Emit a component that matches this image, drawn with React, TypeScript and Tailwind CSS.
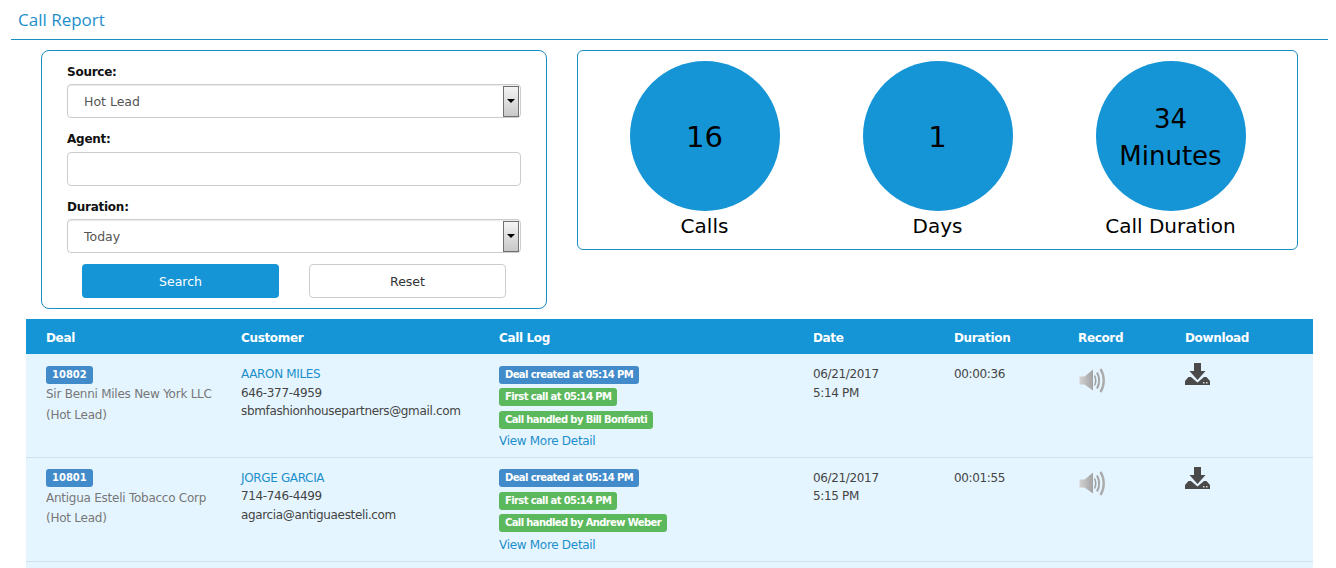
const rows = [
  {
    id: "10802",
    company: "Sir Benni Miles New York LLC",
    name: "AARON MILES",
    phone: "646-377-4959",
    email: "sbmfashionhousepartners@gmail.com",
    agent: "Call handled by Bill Bonfanti",
    date: "06/21/2017",
    time: "5:14 PM",
    duration: "00:00:36",
  },
  {
    id: "10801",
    company: "Antigua Esteli Tobacco Corp",
    name: "JORGE GARCIA",
    phone: "714-746-4499",
    email: "agarcia@antiguaesteli.com",
    agent: "Call handled by Andrew Weber",
    date: "06/21/2017",
    time: "5:15 PM",
    duration: "00:01:55",
  },
];

const stats = [
  { value: "16", label: "Calls", big: true },
  { value: "1", label: "Days", big: true },
  { value: "34 Minutes", label: "Call Duration", big: false },
];

function SpeakerIcon({ id }: { id: string }) {
  return (
    <svg width="27" height="25" viewBox="0 0 27 25" className="block">
      <defs>
        <linearGradient id={id} x1="0" y1="0" x2="1" y2="0">
          <stop offset="0" stopColor="#d2d2d2" />
          <stop offset="1" stopColor="#a2a2a2" />
        </linearGradient>
      </defs>
      <path d="M0.500 8.500h5L14 1.500v21l-8.500-6h-5z" fill={`url(#${id})`} />
      <path d="M15.500 7.500c1.500 3 1.500 7 0 10" fill="none" stroke="#9e9e9e" strokeWidth="1.500" />
      <path d="M18 4.500c2.600 4.800 2.600 11.200 0 16" fill="none" stroke="#a4a4a4" strokeWidth="2" />
      <path d="M21.500 1c4.300 6.800 4.300 16.200 0 23" fill="none" stroke="#acacac" strokeWidth="2.400" />
    </svg>
  );
}

function DownloadIcon() {
  return (
    <svg width="25" height="22" viewBox="0 0 25 22" className="block">
      <path d="M9 0h7v8h4.500l-8 9-8-9H9z" fill="#4a4a4a" />
      <path d="M0 18 3.500 14H6l6.500 5.500L19 14h2.500L25 18v4H0z" fill="#4a4a4a" />
      <rect x="18" y="19" width="1.500" height="1.500" fill="#d8d8d8" />
      <rect x="21" y="19" width="1.500" height="1.500" fill="#d8d8d8" />
    </svg>
  );
}

function SelectBox({ value }: { value: string }) {
  return (
    <div className="flex h-[34px] items-center justify-between rounded-[4px] border border-[#ccc] bg-white pl-4 pr-px shadow-[inset_0_1px_1px_rgba(0,0,0,0.08)]">
      <span className="pt-[2px] text-[12.500px] text-[#555]">{value}</span>
      <span className="flex h-[31px] w-4 items-center justify-center border border-[#707070] bg-gradient-to-b from-[#f4f4f4] to-[#c8c8c8]">
        <span className="h-0 w-0 border-x-[4px] border-t-[4px] border-x-transparent border-t-black" />
      </span>
    </div>
  );
}

function Badge({ text, color }: { text: string; color: string }) {
  return (
    <span className={`block w-fit rounded-[3px] px-[6px] text-[10px] font-bold leading-[18px] tracking-[-0.62px] text-white ${color}`}>
      {text}
    </span>
  );
}

export default function App() {
  return (
    <div className="h-[568px] w-[1336px] overflow-hidden bg-white font-['DejaVu_Sans',sans-serif] text-[12px]">
      {/* Title */}
      <div className="mx-[11px] mr-2 h-[40px] border-b border-[#1b8ec2] pl-[7px] pt-[10px] font-['Open_Sans',sans-serif] text-[17px] leading-5 text-[#1c8fcb]">
        Call Report
      </div>

      {/* Filters and stats */}
      <div className="ml-[41px] mt-[10px] flex items-start gap-[30px]">
        <div className="h-[259px] w-[506px] rounded-[8px] border border-[#1b8ec2] px-[25px] pt-[13px]">
          <label className="block h-[20px] text-[12px] font-bold leading-4 tracking-[-0.25px] text-[#111]">Source:</label>
          <SelectBox value="Hot Lead" />
          <label className="mt-[11px] block h-[23px] text-[12px] font-bold leading-5 tracking-[-0.25px] text-[#111]">Agent:</label>
          <div className="h-[34px] rounded-[4px] border border-[#ccc] bg-white" />
          <label className="mt-[11px] block h-[22px] text-[12px] font-bold leading-5 tracking-[-0.25px] text-[#111]">Duration:</label>
          <SelectBox value="Today" />
          <div className="mt-[11px] flex justify-center gap-[30px]">
            <button className="h-[34px] w-[197px] rounded-[4px] bg-[#1595d6] pt-[2px] text-[12.500px] text-white">Search</button>
            <button className="h-[34px] w-[197px] rounded-[4px] border border-[#ccc] bg-white pt-[2px] text-[12.500px] text-[#333]">Reset</button>
          </div>
        </div>

        <div className="flex h-[200px] w-[721px] justify-center rounded-[6px] border border-[#1b8ec2] pt-[10px]">
          {stats.map((s) => (
            <div key={s.label} className="flex w-[233px] flex-col items-center">
              <div
                className={`flex h-[150px] w-[150px] items-center justify-center rounded-full bg-[#1595d6] pt-1 text-center text-black ${
                  s.big ? "text-[29px]" : "px-5 text-[26px] leading-[37px]"
                }`}
              >
                {s.value}
              </div>
              <div className="mt-[3px] text-[20px] leading-[24px] text-black">{s.label}</div>
            </div>
          ))}
        </div>
      </div>

      {/* Table */}
      <div className="ml-[26px] mt-[10px] w-[1287px] bg-[#e5f5ff]">
        <div className="grid h-[35px] grid-cols-[195px_258px_314px_141px_124px_107px_148px] items-center bg-[#1595d6] pl-5 pt-[2px] text-[12px] font-bold tracking-[-0.35px] text-white">
          <div>Deal</div>
          <div>Customer</div>
          <div>Call Log</div>
          <div>Date</div>
          <div>Duration</div>
          <div>Record</div>
          <div>Download</div>
        </div>
        {rows.map((r, i) => (
          <div
            key={r.id}
            className={`grid grid-cols-[195px_258px_314px_141px_124px_107px_148px] border-b border-[#d3e0ea] pl-5 pt-[11.500px] text-[12px] tracking-[-0.35px] text-[#444] ${
              i === 0 ? "h-[103.500px]" : "h-[104.500px]"
            }`}
          >
            <div>
              <span className="block w-fit rounded-[3px] bg-[#428bca] px-[6px] text-[10px] font-bold leading-[18px] tracking-normal text-white">{r.id}</span>
              <div className="mt-[0.500px] leading-[20.500px] tracking-[-0.25px] text-[#777]">{r.company}</div>
              <div className="leading-[20.500px] tracking-[-0.25px] text-[#777]">(Hot Lead)</div>
            </div>
            <div className="-mt-[0.500px] leading-[18.500px]">
              <a className="block text-[#1c8fcb]">{r.name}</a>
              <div>{r.phone}</div>
              <div>{r.email}</div>
            </div>
            <div className="flex flex-col gap-[4.500px]">
              <Badge text="Deal created at 05:14 PM" color="bg-[#428bca]" />
              <Badge text="First call at 05:14 PM" color="bg-[#5cb85c]" />
              <Badge text={r.agent} color="bg-[#5cb85c]" />
              <a className="leading-[17px] tracking-[-0.3px] text-[#1c8fcb]">View More Detail</a>
            </div>
            <div className="-mt-[0.500px] leading-[18.500px]">
              <div>{r.date}</div>
              <div>{r.time}</div>
            </div>
            <div className="-mt-[0.500px] leading-[18.500px]">{r.duration}</div>
            <div className="pl-px pt-[2px]">
              <SpeakerIcon id={`spk-${r.id}`} />
            </div>
            <div className="-mt-[2.500px]">
              <DownloadIcon />
            </div>
          </div>
        ))}
        <div className="h-2" />
      </div>
    </div>
  );
}
